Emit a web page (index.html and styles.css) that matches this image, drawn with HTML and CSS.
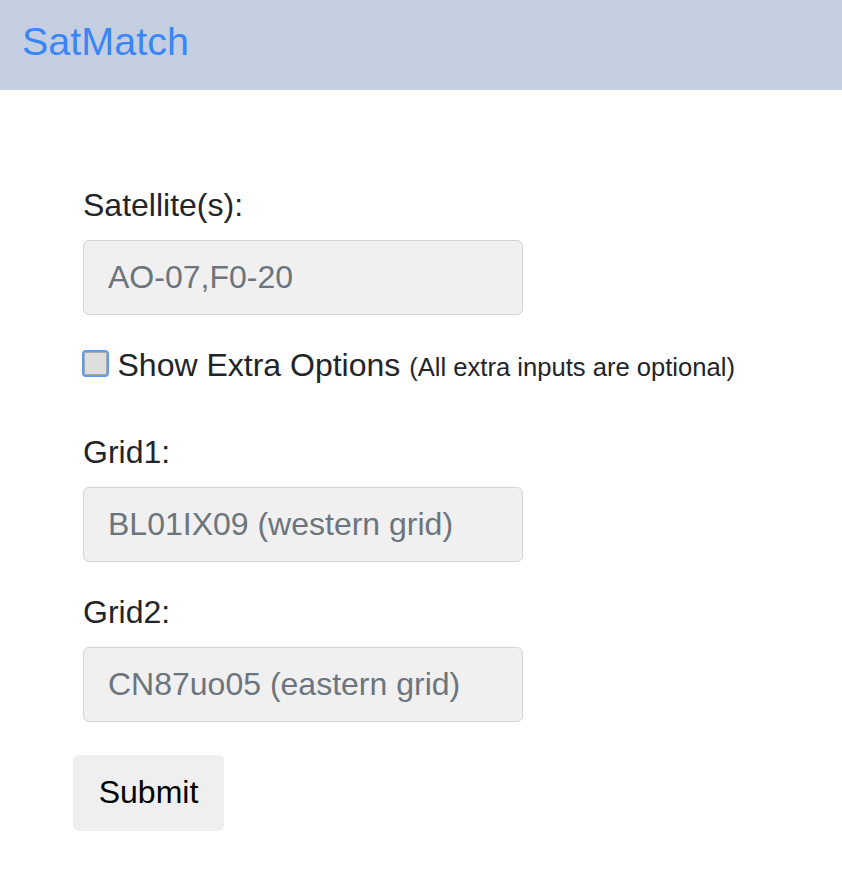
FILE: index.html
```
<!DOCTYPE html>
<html lang="en">
<head>
<meta charset="utf-8">
<title>SatMatch</title>
<link rel="stylesheet" href="styles.css">
</head>
<body>
<header class="topbar">
  <a class="brand" href="#">SatMatch</a>
</header>
<main class="content">
  <form class="form">
    <div class="group">
      <label class="label" for="sats">Satellite(s):</label>
      <input class="field" id="sats" type="text" placeholder="AO-07,F0-20">
    </div>
    <div class="check-row">
      <label class="check-label"><input class="check" type="checkbox">Show Extra Options <small class="hint">(All extra inputs are optional)</small></label>
    </div>
    <div class="group">
      <label class="label" for="grid1">Grid1:</label>
      <input class="field" id="grid1" type="text" placeholder="BL01IX09 (western grid)">
    </div>
    <div class="group">
      <label class="label" for="grid2">Grid2:</label>
      <input class="field" id="grid2" type="text" placeholder="CN87uo05 (eastern grid)">
    </div>
    <button class="submit" type="button">Submit</button>
  </form>
</main>
</body>
</html>
```
FILE: styles.css
```
* { box-sizing: border-box; }
html, body { margin: 0; padding: 0; }
body {
  font-family: "Liberation Sans", Arial, sans-serif;
  font-size: 32px;
  line-height: 46.5px;
  color: #212529;
  background: #ffffff;
}
.topbar {
  height: 90px;
  background: #c3cfe1;
  padding: 22px 0 0 22px;
}
.brand {
  display: block;
  font-size: 39.5px;
  line-height: 1;
  color: #3a86f7;
  text-decoration: none;
}
.content {
  padding: 92px 0 40px 73px;
}
.group {
  padding-left: 10px;
  margin-bottom: 27px;
}
.label {
  display: block;
  margin-bottom: 11.5px;
}
.field {
  display: block;
  width: 440px;
  height: 75px;
  padding: 0 24px;
  font-family: inherit;
  font-size: 32px;
  color: #495057;
  background: #f0f0f0;
  border: 1.5px solid #ced4da;
  border-radius: 6px;
  outline: none;
}
.field::placeholder { color: #6c757d; opacity: 1; }
.check-row {
  padding-left: 9px;
  margin-bottom: 38px;
}
.check-label { cursor: pointer; }
.check {
  -webkit-appearance: none;
  appearance: none;
  display: inline-block;
  width: 27px;
  height: 27px;
  margin: 0 8.5px -1px 0;
  vertical-align: baseline;
  border: 2px solid #5a9cf8;
  border-radius: 4px;
  background: #dedede;
  box-shadow: inset 0 0 0 1px #a9a9a9;
}
.hint { font-size: 80%; }
.submit {
  margin-top: 6px;
  width: 151px;
  height: 76px;
  padding: 0;
  font-family: inherit;
  font-size: 32px;
  color: #000000;
  background: #efefef;
  border: none;
  border-radius: 6px;
}
```
